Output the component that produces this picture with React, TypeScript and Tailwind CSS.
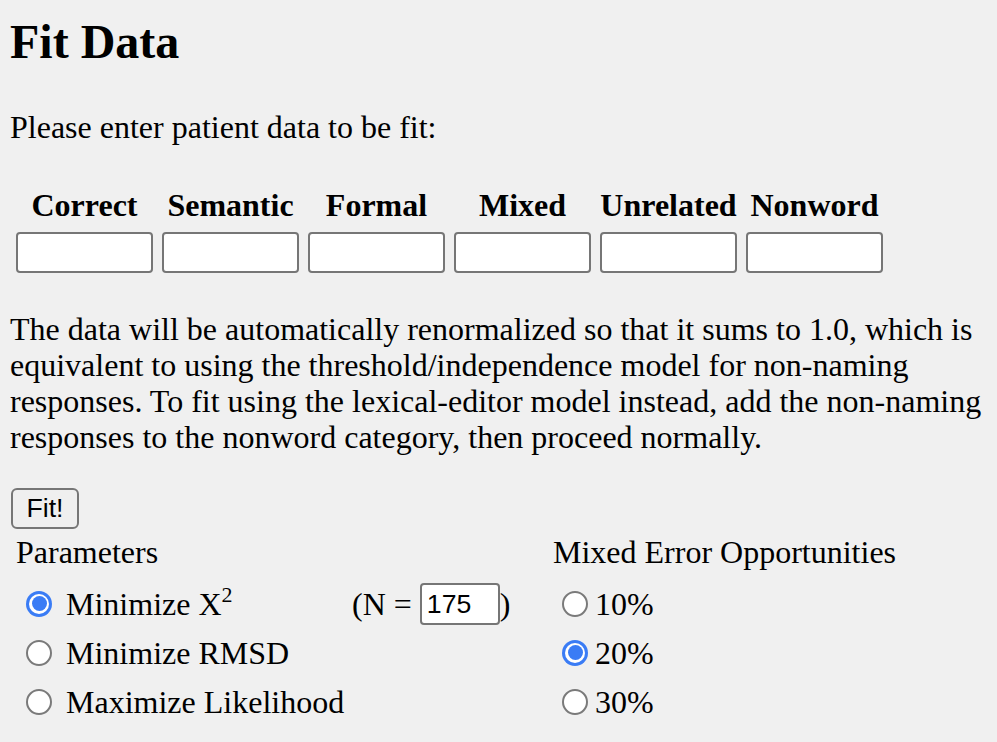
import React from "react";

function Radio({ checked }: { checked?: boolean }) {
  if (checked) {
    return (
      <span className="flex h-[26px] w-[26px] shrink-0 items-center justify-center rounded-full bg-[#3a7cf5]">
        <span className="flex h-[20px] w-[20px] items-center justify-center rounded-full bg-white">
          <span className="h-[15px] w-[15px] rounded-full bg-[#3a7cf5]" />
        </span>
      </span>
    );
  }
  return <span className="block h-[26px] w-[26px] shrink-0 rounded-full border-[2px] border-[#7a7a7a] bg-white" />;
}

const cols = ["Correct", "Semantic", "Formal", "Mixed", "Unrelated", "Nonword"];

export default function App() {
  return (
    <div
      className="min-h-[742px] w-full bg-[#f0f0f0] pl-[10px] text-black"
      style={{ fontFamily: '"Liberation Serif", "Times New Roman", serif' }}
    >
      <h2 className="pt-[14px] text-[48px] font-bold leading-[56px]">Fit Data</h2>
      <p className="mt-[39px] text-[32px] leading-[36px]">Please enter patient data to be fit:</p>

      <div className="ml-[6px] mt-[42px] grid grid-cols-[repeat(6,137px)] gap-x-[9px] gap-y-[9px]">
        {cols.map((c) => (
          <div key={c} className="text-center text-[32px] font-bold leading-[36px] whitespace-nowrap">
            {c}
          </div>
        ))}
        {cols.map((c) => (
          <div key={c + "-in"} className="h-[41px] w-[137px] rounded-[4px] border-2 border-[#767676] bg-white" />
        ))}
      </div>

      <p className="mt-[38px] whitespace-nowrap text-[32px] leading-[36px]">
        The data will be automatically renormalized so that it sums to 1.0, which is
        <br />
        equivalent to using the threshold/independence model for non-naming
        <br />
        responses. To fit using the lexical-editor model instead, add the non-naming
        <br />
        responses to the nonword category, then proceed normally.
      </p>

      <button
        className="ml-[1px] mt-[33px] flex h-[41px] w-[68px] items-center justify-center rounded-[6px] border-2 border-[#767676] bg-[#efefef] text-[26.67px] leading-none"
        style={{ fontFamily: '"Liberation Sans", Arial, sans-serif' }}
      >
        Fit!
      </button>

      <div className="ml-[6px] mt-[5px] flex text-[32px] leading-[36px]">
        <div className="w-[537px]">
          <div>Parameters</div>
          <div className="mt-[9px] flex h-[49px] items-center pl-[10px]">
            <Radio checked />
            <span className="ml-[14px] w-[286px] whitespace-nowrap">
              Minimize X<sup className="relative top-[-13px] align-baseline text-[22px] leading-none">2</sup>
            </span>
            <span className="whitespace-nowrap">(N =&nbsp;</span>
            <span
              className="flex h-[42px] w-[80px] items-center rounded-[4px] border-2 border-[#767676] bg-white pl-[5px] text-[26.67px]"
              style={{ fontFamily: '"Liberation Sans", Arial, sans-serif' }}
            >
              175
            </span>
            <span>)</span>
          </div>
          <div className="flex h-[49px] items-center pl-[10px]">
            <Radio />
            <span className="ml-[14px] whitespace-nowrap">Minimize RMSD</span>
          </div>
          <div className="flex h-[49px] items-center pl-[10px]">
            <Radio />
            <span className="ml-[14px] whitespace-nowrap">Maximize Likelihood</span>
          </div>
        </div>
        <div>
          <div className="whitespace-nowrap">Mixed Error Opportunities</div>
          <div className="mt-[9px] flex h-[49px] items-center pl-[9px]">
            <Radio />
            <span className="ml-[7px]">10%</span>
          </div>
          <div className="flex h-[49px] items-center pl-[9px]">
            <Radio checked />
            <span className="ml-[7px]">20%</span>
          </div>
          <div className="flex h-[49px] items-center pl-[9px]">
            <Radio />
            <span className="ml-[7px]">30%</span>
          </div>
        </div>
      </div>
    </div>
  );
}
